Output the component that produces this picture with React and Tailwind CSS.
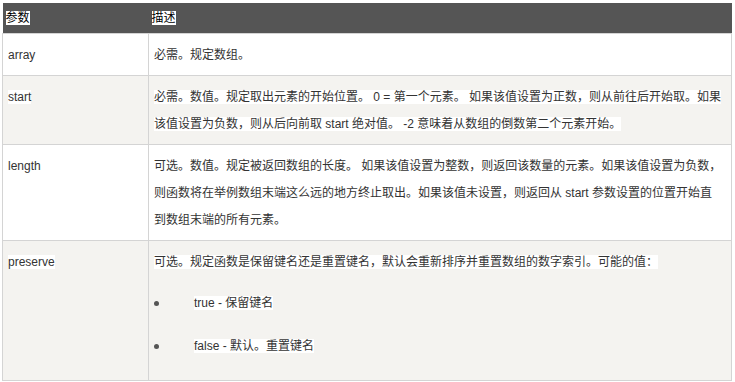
import React from "react";

const HL = ({ children }) => <span className="bg-white">{children}</span>;

const rows = [
  {
    name: "array",
    gray: false,
    lines: ["必需。规定数组。"],
  },
  {
    name: "start",
    gray: true,
    lines: [
      "必需。数值。规定取出元素的开始位置。 0 = 第一个元素。 如果该值设置为正数，则从前往后开始取。如果",
      "该值设置为负数，则从后向前取 start 绝对值。 -2 意味着从数组的倒数第二个元素开始。",
    ],
  },
  {
    name: "length",
    gray: false,
    lines: [
      "可选。数值。规定被返回数组的长度。 如果该值设置为整数，则返回该数量的元素。如果该值设置为负数，",
      "则函数将在举例数组末端这么远的地方终止取出。如果该值未设置，则返回从 start 参数设置的位置开始直",
      "到数组末端的所有元素。",
    ],
  },
];

const Lines = ({ lines }) =>
  lines.map((l, i) => (
    <React.Fragment key={i}>
      <HL>{l}</HL>
      {i < lines.length - 1 && <br />}
    </React.Fragment>
  ));

const cell =
  "border border-[#d4d4d4] align-top px-[5px] pt-[8px] pb-[6px] leading-[27px]";

export default function App() {
  return (
    <div
      className="w-[735px] h-[382px] bg-white pt-[3px] pl-[2px] text-[12px] text-[#333]"
      style={{ fontFamily: '"Liberation Sans", "Noto Sans CJK SC", sans-serif' }}
    >
      <table className="table-fixed w-[730px] border-collapse">
        <colgroup>
          <col className="w-[146px]" />
          <col />
        </colgroup>
        <thead>
          <tr className="bg-[#555555] h-[30px]">
            <th className="text-left font-normal px-[3px] text-black">
              <HL>参数</HL>
            </th>
            <th className="text-left font-normal px-[3px] text-black">
              <HL>描述</HL>
            </th>
          </tr>
        </thead>
        <tbody>
          {rows.map((r) => (
            <tr key={r.name} className={r.gray ? "bg-[#f4f3f0]" : "bg-white"}>
              <td className={cell}>
                <HL>{r.name}</HL>
              </td>
              <td className={cell + " whitespace-nowrap"}>
                <Lines lines={r.lines} />
              </td>
            </tr>
          ))}
          <tr className="bg-[#f4f3f0]">
            <td className={cell}>
              <HL>preserve</HL>
            </td>
            <td className={cell + " whitespace-nowrap"}>
              <HL>可选。规定函数是保留键名还是重置键名，默认会重新排序并重置数组的数字索引。可能的值：</HL>
              <ul className="mt-[14px] mb-[14px] flex flex-col gap-[16px]">
                {["true - 保留键名", "false - 默认。重置键名"].map((t) => (
                  <li key={t} className="flex items-center">
                    <span className="w-[5px] h-[5px] rounded-full bg-[#555]" />
                    <span className="ml-[35px]">
                      <HL>{t}</HL>
                    </span>
                  </li>
                ))}
              </ul>
            </td>
          </tr>
        </tbody>
      </table>
    </div>
  );
}
